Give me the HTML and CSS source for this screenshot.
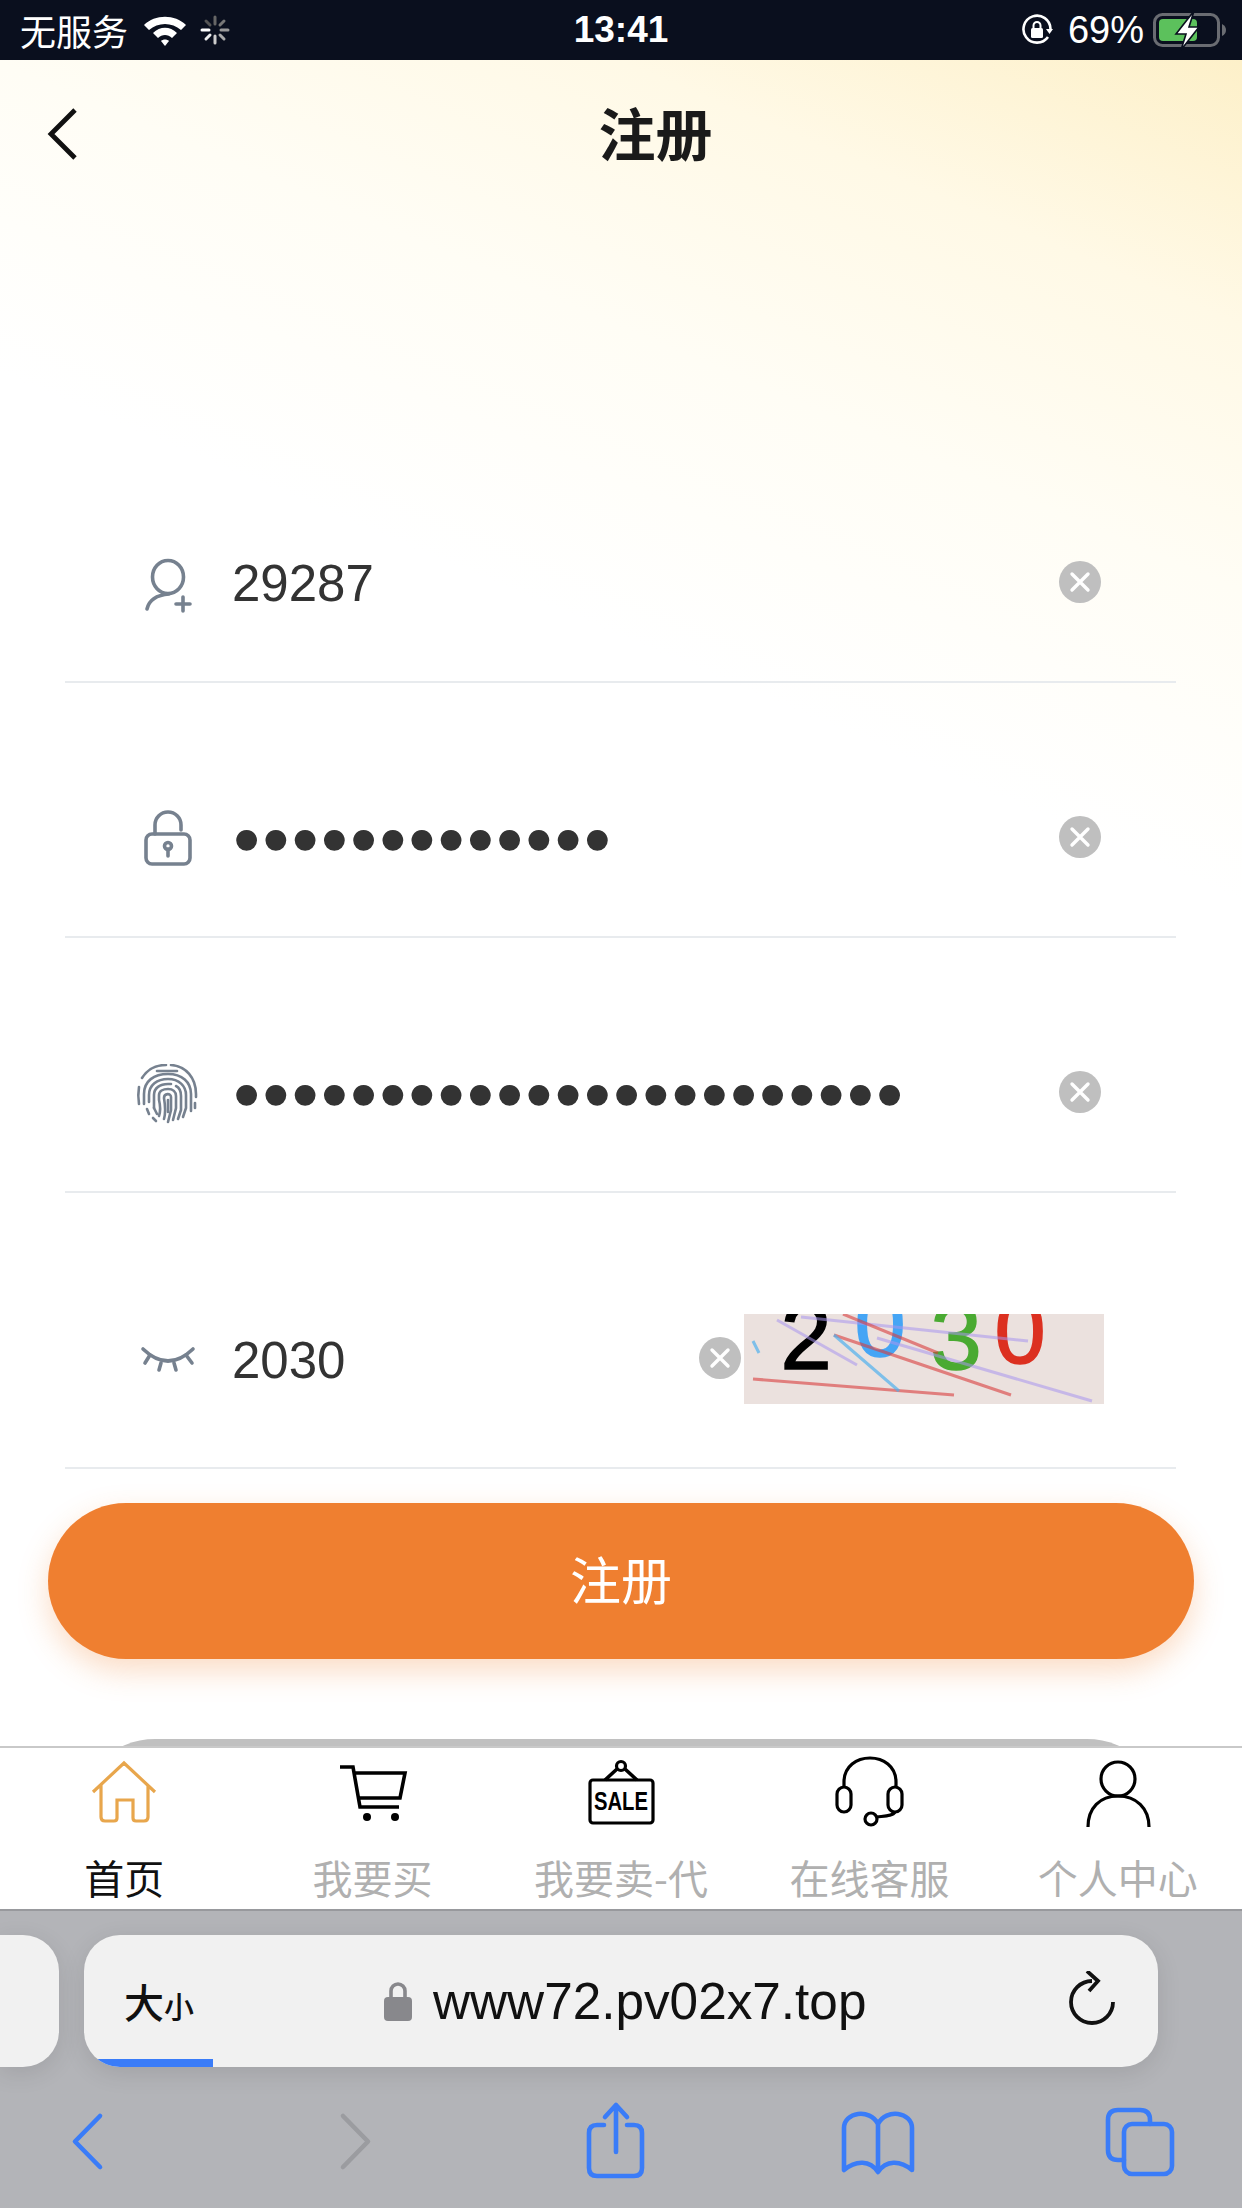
FILE: index.html
```html
<!DOCTYPE html>
<html lang="zh-CN">
<head>
    <meta charset="UTF-8">
    <meta name="viewport" content="width=device-width, initial-scale=1.0">
    <title>注册</title>
    <link rel="stylesheet" href="styles.css">
</head>
<body>
    <svg class="defs" width="0" height="0">
        <symbol id="clear" viewBox="0 0 42 42">
            <circle cx="21" cy="21" r="21" fill="#bfbfbf"/>
            <path d="M13 13 L29 29 M29 13 L13 29" stroke="#fff" stroke-width="3.4" stroke-linecap="round"/>
        </symbol>
    </svg>

    <div class="statusBar">
        <div class="statusLeft">
            <span>无服务</span>
            <svg class="wifi" width="46" height="34" viewBox="0 0 46 34">
                <path d="M2 12 C13 1 33 1 44 12 L39 17 C30 9 16 9 7 17 Z" fill="#fff"/>
                <path d="M11 20 C18 13 28 13 35 20 L30 25 C26 21 20 21 16 25 Z" fill="#fff"/>
                <path d="M19 28 C21 26 25 26 27 28 L23 33 Z" fill="#fff"/>
            </svg>
            <svg class="spinner" width="30" height="30" viewBox="0 0 30 30" stroke-width="3" stroke-linecap="round">
                <path d="M15 2 V9" stroke="#666"/>
                <path d="M24 6 L20 10" stroke="#777"/>
                <path d="M28 15 H21" stroke="#999"/>
                <path d="M24 24 L20 20" stroke="#aaa"/>
                <path d="M15 28 V21" stroke="#ccc"/>
                <path d="M6 24 L10 20" stroke="#eee"/>
                <path d="M2 15 H9" stroke="#fff"/>
                <path d="M6 6 L10 10" stroke="#555"/>
            </svg>
        </div>
        <div class="statusTime">13:41</div>
        <div class="statusRight">
            <svg class="rotLock" width="32" height="32" viewBox="0 0 32 32">
                <path d="M27 23 A13.5 13.5 0 1 1 29.5 15" fill="none" stroke="#fff" stroke-width="2.6"/>
                <path d="M25 15 H32 L28.500 20 Z" fill="#fff"/>
                <rect x="10" y="14" width="12" height="10" rx="1.500" fill="#fff"/>
                <path d="M12.500 14 V11.500 a3.500 3.500 0 0 1 7 0 V14" fill="none" stroke="#fff" stroke-width="2"/>
            </svg>
            <span>69%</span>
            <svg class="battery" width="74" height="44" viewBox="0 0 74 44">
                <rect x="1.500" y="6.500" width="64" height="31" rx="8" fill="none" stroke="#6a6c72" stroke-width="3"/>
                <rect x="6" y="11" width="38" height="22" rx="4" fill="#5cc15c"/>
                <path d="M69 16 Q73 18 73 22 Q73 26 69 28 Z" fill="#6a6c72"/>
                <path d="M41 3 L23 26 H33 L28 42 L46 19 H36 Z" fill="#fff" stroke="#0a0f1e" stroke-width="1.600"/>
            </svg>
        </div>
    </div>

    <div class="main">
        <div class="navBar">
            <svg class="navBack" width="30" height="52" viewBox="0 0 30 52">
                <path d="M28 2 L4 26 L28 50" fill="none" stroke="#111" stroke-width="4.800"/>
            </svg>
            <div class="navTitle">注册</div>
        </div>

        <div class="form">
            <div class="row">
                <svg class="rowIcon" width="70" height="60" viewBox="0 0 70 60">
                    <ellipse cx="35" cy="23" rx="15.500" ry="16.500"/>
                    <path d="M14 55 C16 46 24 41 36 40"/>
                    <path d="M43 50 H57 M50 43 V57"/>
                </svg>
                <div class="rowValue">29287</div>
                <svg class="clearBtn"><use href="#clear"/></svg>
            </div>
            <div class="row">
                <svg class="rowIcon" width="70" height="60" viewBox="0 0 70 60">
                    <rect x="13" y="25" width="44" height="30" rx="6"/>
                    <path d="M22 25 V16 a13 13 0 0 1 26 0 V21"/>
                    <circle cx="35" cy="37" r="3.500"/>
                    <path d="M35 40 V47"/>
                </svg>
                <div class="rowValue rowDots">●●●●●●●●●●●●●</div>
                <svg class="clearBtn"><use href="#clear"/></svg>
            </div>
            <div class="row">
                <svg class="rowIcon rowIconThin" width="70" height="60" viewBox="0 0 70 60">
                    <path d="M33 1 C22 1 14 6 9 14"/>
                    <path d="M38 1 C53 2 63 14 63 30 V33"/>
                    <path d="M6 23 C5 29 5 34 6 40"/>
                    <path d="M62 39 V44"/>
                    <path d="M24 7 H44"/>
                    <path d="M11 40 V30 C11 17 21 10 35 10 C49 10 58 18 58 30 V47"/>
                    <path d="M14 45 L16 50"/>
                    <path d="M16 38 V31 C16 21 24 15 35 15 C46 15 53 22 53 31 V44 L50 53"/>
                    <path d="M20 54 L23 57"/>
                    <path d="M21 44 V31 C21 24 27 20 35 20 H38"/>
                    <path d="M43 22 C47 24 48 28 48 32 V46 L45 55"/>
                    <path d="M21 44 L24 50"/>
                    <path d="M26 52 C28 46 27 40 26 36 V31 C26 27 30 25 35 25 C40 25 43 28 43 32 V44 L40 56"/>
                    <path d="M31 55 C33 48 32 40 31 34 C31 29 38 29 38 33 V46 L35 58"/>
                    <path d="M35 36 V48"/>
                </svg>
                <div class="rowValue rowDots">●●●●●●●●●●●●●●●●●●●●●●●</div>
                <svg class="clearBtn"><use href="#clear"/></svg>
            </div>
            <div class="row rowCode">
                <svg class="rowIcon" width="70" height="60" viewBox="0 0 70 60">
                    <path d="M10 20 Q35 44 60 20"/>
                    <path d="M17 26 L12 34 M28 34 L26 41 M41 34 L43 41 M53 26 L59 34"/>
                </svg>
                <div class="rowValue">2030</div>
                <svg class="clearBtn"><use href="#clear"/></svg>
                <svg class="captcha" width="360" height="90" viewBox="0 0 360 90">
                    <rect width="360" height="90" fill="#ebe1de"/>
                    <text x="62" y="55" fill="#000" stroke="#000">2</text>
                    <text x="136" y="42" fill="#45a5f5" stroke="#45a5f5">0</text>
                    <text x="212" y="55" fill="#4aaa32" stroke="#4aaa32">3</text>
                    <text x="276" y="49" fill="#dc3020" stroke="#dc3020">0</text>
                    <path d="M33 6 L113 51 M57 3 L284 27 M133 24 L348 87" stroke="#a896ee" stroke-opacity=".55" stroke-width="3"/>
                    <path d="M99 0 L194 39 M90 21 L267 81 M9 65 L210 81" stroke="#d83c3c" stroke-opacity=".6" stroke-width="3"/>
                    <path d="M90 21 L155 77 M9 27 L15 39" stroke="#50b0ee" stroke-opacity=".7" stroke-width="3"/>
                </svg>
            </div>
        </div>

        <div class="submitBtn">注册</div>
        <div class="secondBtn"></div>
    </div>

    <div class="tabBar">
        <div class="tabItem tabActive">
            <svg class="tabIcon tabIconHome" width="72" height="72" viewBox="0 0 72 72">
                <path d="M5 34 L36 5 L67 34 M13 27 V59 Q13 63 17 63 H26 Q29 63 29 60 V42 H45 V60 Q45 63 48 63 H56 Q60 63 60 59 V27"/>
            </svg>
            <span>首页</span>
        </div>
        <div class="tabItem">
            <svg class="tabIcon" width="72" height="72" viewBox="0 0 72 72">
                <path d="M3 9 H16 L23 49 H62 M18 15 H68 L63 40 H22" stroke-width="3.600"/>
                <circle cx="30" cy="59" r="4" fill="#000" stroke="none"/>
                <circle cx="58" cy="59" r="4" fill="#000" stroke="none"/>
            </svg>
            <span>我要买</span>
        </div>
        <div class="tabItem">
            <svg class="tabIcon" width="72" height="72" viewBox="0 0 72 72">
                <circle cx="36" cy="8" r="4.500"/>
                <path d="M32 11 L20 22 M40 11 L52 22" stroke-width="3.600"/>
                <rect x="5" y="22" width="63" height="43" rx="3"/>
                <text class="saleText" x="36" y="52" textLength="54" lengthAdjust="spacingAndGlyphs">SALE</text>
            </svg>
            <span>我要卖-代</span>
        </div>
        <div class="tabItem">
            <svg class="tabIcon" width="72" height="72" viewBox="0 0 72 72">
                <path d="M11 29 V24 C11 -8 63 -8 63 24 V29"/>
                <rect x="4" y="29" width="14" height="25" rx="7"/>
                <rect x="55" y="29" width="14" height="25" rx="7"/>
                <path d="M62 54 C60 58 52 58 44 59"/>
                <circle cx="38" cy="61" r="6"/>
            </svg>
            <span>在线客服</span>
        </div>
        <div class="tabItem">
            <svg class="tabIcon" width="72" height="72" viewBox="0 0 72 72">
                <ellipse cx="36" cy="21" rx="17" ry="17"/>
                <path d="M6 69 C6 50 18 38 36 38 C54 38 67 50 67 69"/>
            </svg>
            <span>个人中心</span>
        </div>
    </div>

    <div class="browser">
        <div class="urlRow">
            <div class="prevTab"></div>
            <div class="urlBar">
                <div class="textSize">大<small>小</small></div>
                <svg class="urlLock" width="28" height="40" viewBox="0 0 28 40">
                    <path d="M7 18 V10 a7 7 0 0 1 14 0 V18" fill="none" stroke="#88888c" stroke-width="3.600"/>
                    <rect y="16" width="28" height="24" rx="4" fill="#88888c"/>
                </svg>
                <div class="urlText">www72.pv02x7.top</div>
                <svg class="reload" width="60" height="60" viewBox="0 0 60 60">
                    <path d="M30 10 A21 21 0 1 0 51 31 M25 0 L36 10 L27 20" fill="none" stroke="#111" stroke-width="3.800"/>
                </svg>
                <div class="progress"></div>
            </div>
        </div>
        <div class="toolBar">
            <svg width="80" height="80" viewBox="0 0 80 80"><path d="M53 16 L28 41.500 L53 67"/></svg>
            <svg class="toolOff" width="80" height="80" viewBox="0 0 80 80"><path d="M27 16 L52 41.500 L27 67"/></svg>
            <svg class="toolShare" width="80" height="80" viewBox="0 0 80 80">
                <path d="M28 25 H21 Q13 25 13 33 V68 Q13 76 21 76 H58 Q66 76 66 68 V33 Q66 25 58 25 H51"/>
                <path d="M40 52 V5 M29 17 L40 5 L51 17"/>
            </svg>
            <svg width="80" height="80" viewBox="0 0 80 80">
                <path d="M6 70 V28 C6 12 32 8 40 24 C48 8 74 12 74 28 V70 C62 60 48 60 40 72 C32 60 18 60 6 70 Z M40 24 V70"/>
            </svg>
            <svg width="80" height="80" viewBox="0 0 80 80">
                <path d="M24 60 H18 Q8 60 8 50 V20 Q8 10 18 10 H40 Q50 10 50 20 V24"/>
                <rect x="24" y="24" width="48" height="50" rx="8"/>
            </svg>
        </div>
    </div>
</body>
</html>
```

FILE: styles.css
```css
* {
    box-sizing: border-box;
}
html, body {
    margin: 0;
    padding: 0;
}
body {
    width: 1242px;
    height: 2208px;
    overflow: hidden;
    display: flex;
    flex-direction: column;
    font-family: "Liberation Sans", "Noto Sans CJK SC", sans-serif;
    background: #fff;
}
.defs {
    position: absolute;
}

/* status bar */
.statusBar {
    height: 60px;
    flex: none;
    display: grid;
    grid-template-columns: 1fr auto 1fr;
    align-items: center;
    padding: 0 16px;
    background: #0a0f1e;
    color: #fff;
    font-size: 38px;
}
.statusLeft {
    display: flex;
    align-items: center;
    padding-left: 4px;
    font-family: "Noto Sans CJK SC", sans-serif;
    font-size: 36px;
}
.wifi {
    margin-left: 14px;
}
.spinner {
    margin-left: 12px;
}
.statusTime {
    font-weight: bold;
    font-size: 37px;
}
.statusRight {
    display: flex;
    align-items: center;
    justify-content: flex-end;
    margin-right: -1px;
}
.rotLock {
    margin-right: 15px;
}
.battery {
    margin-left: 9px;
}

/* main area */
.main {
    height: 1686px;
    flex: none;
    overflow: hidden;
    background: linear-gradient(203deg, #fdf0c9 0%, #fff9e6 12%, #fffdf5 24%, #fff 38%);
}
.navBar {
    height: 152px;
    display: flex;
    align-items: center;
    padding: 0 8px 0 47px;
}
.navBack {
    margin-bottom: 4px;
}
.navTitle {
    flex: 1;
    padding-bottom: 10px;
    text-align: center;
    font-family: "Noto Sans CJK SC", sans-serif;
    font-size: 57px;
    font-weight: bold;
    color: #1a1a1a;
}
.form {
    padding: 216px 66px 0 65px;
}
.row {
    display: flex;
    align-items: center;
    padding: 126px 75px 67px 68px;
    height: 255px;
    border-bottom: 2px solid #e8ebee;
}
.rowCode {
    height: 276px;
    padding: 121px 72px 63px 68px;
}
.rowCode .rowValue {
    padding-top: 3px;
}
.rowIcon {
    flex: none;
    margin-right: 29px;
    fill: none;
    stroke: #76818f;
    stroke-width: 3.6;
    stroke-linecap: round;
}
.rowIconThin {
    stroke-width: 2.6;
}
.rowValue {
    flex: 1;
    font-size: 51px;
    color: #333;
    line-height: 60px;
}
.rowDots {
    padding-bottom: 5px;
    font-size: 48.4px;
    white-space: nowrap;
}
.clearBtn {
    flex: none;
    width: 42px;
    height: 42px;
    margin-bottom: 5px;
}
.rowCode .clearBtn {
    margin-bottom: 3px;
}
.captcha {
    flex: none;
    margin-left: 3px;
}
.captcha text {
    font-family: "Liberation Sans", sans-serif;
    font-size: 92px;
    stroke-width: 1.6;
    text-anchor: middle;
}
.submitBtn {
    margin: 34px 48px 0;
    height: 156px;
    border-radius: 78px;
    background: #ef7f30;
    box-shadow: 0 12px 30px rgba(240, 128, 48, 0.28);
    color: #fff;
    font-family: "Noto Sans CJK SC", sans-serif;
    font-size: 51px;
    line-height: 151px;
    text-align: center;
}
.secondBtn {
    margin: 80px 77px 0;
    height: 156px;
    border-radius: 78px;
    background: #c0c0c0;
}

/* bottom tabs */
.tabBar {
    height: 165px;
    flex: none;
    display: grid;
    grid-template-columns: repeat(5, 1fr);
    padding-top: 10px;
    background: #fff;
    border-top: 2px solid #c9c9c9;
    border-bottom: 2px solid #98999d;
}
.tabItem {
    display: flex;
    flex-direction: column;
    align-items: center;
    font-family: "Noto Sans CJK SC", sans-serif;
    font-size: 40px;
    line-height: 56px;
    color: #b0b0b0;
    white-space: nowrap;
}
.tabActive {
    color: #111;
}
.tabIcon {
    flex: none;
    margin-bottom: 19px;
    overflow: visible;
    fill: none;
    stroke: #000;
    stroke-width: 3.2;
}
.tabIconHome {
    stroke: #e8a64c;
}
.saleText {
    font-family: "Liberation Sans", sans-serif;
    font-size: 25px;
    font-weight: bold;
    text-anchor: middle;
    fill: #000;
    stroke: none;
}

/* browser chrome */
.browser {
    flex: 1;
    background: #b3b4b8;
}
.urlRow {
    display: flex;
    gap: 25px;
    padding-top: 24px;
}
.prevTab {
    width: 59px;
    height: 132px;
    flex: none;
    background: #f1f1f1;
    border-radius: 0 36px 36px 0;
    box-shadow: 0 6px 24px rgba(0, 0, 0, 0.1);
}
.urlBar {
    position: relative;
    width: 1074px;
    height: 132px;
    flex: none;
    display: flex;
    align-items: center;
    padding: 0 36px 0 40px;
    background: #f1f1f1;
    border-radius: 36px;
    box-shadow: 0 6px 24px rgba(0, 0, 0, 0.1);
    overflow: hidden;
}
.textSize {
    width: 260px;
    flex: none;
    font-family: "Noto Sans CJK SC", sans-serif;
    font-size: 40px;
    font-weight: 500;
    color: #111;
}
.textSize small {
    font-size: 30px;
}
.urlLock {
    flex: none;
    margin-right: 21px;
}
.urlText {
    flex: 1;
    font-size: 51.3px;
    color: #111;
}
.progress {
    position: absolute;
    left: 0;
    bottom: 0;
    width: 129px;
    height: 8px;
    background: #3a7cf8;
}
.toolBar {
    display: flex;
    gap: 182px;
    padding: 33px 0 0 47px;
}
.toolBar svg {
    flex: none;
    fill: none;
    stroke: #3a7cf8;
    stroke-width: 4.6;
    stroke-linecap: round;
    stroke-linejoin: round;
}
.toolBar .toolOff {
    margin-left: 7px;
    stroke: #9b9ca0;
}
.toolBar .toolShare {
    margin-left: -2px;
}
```
